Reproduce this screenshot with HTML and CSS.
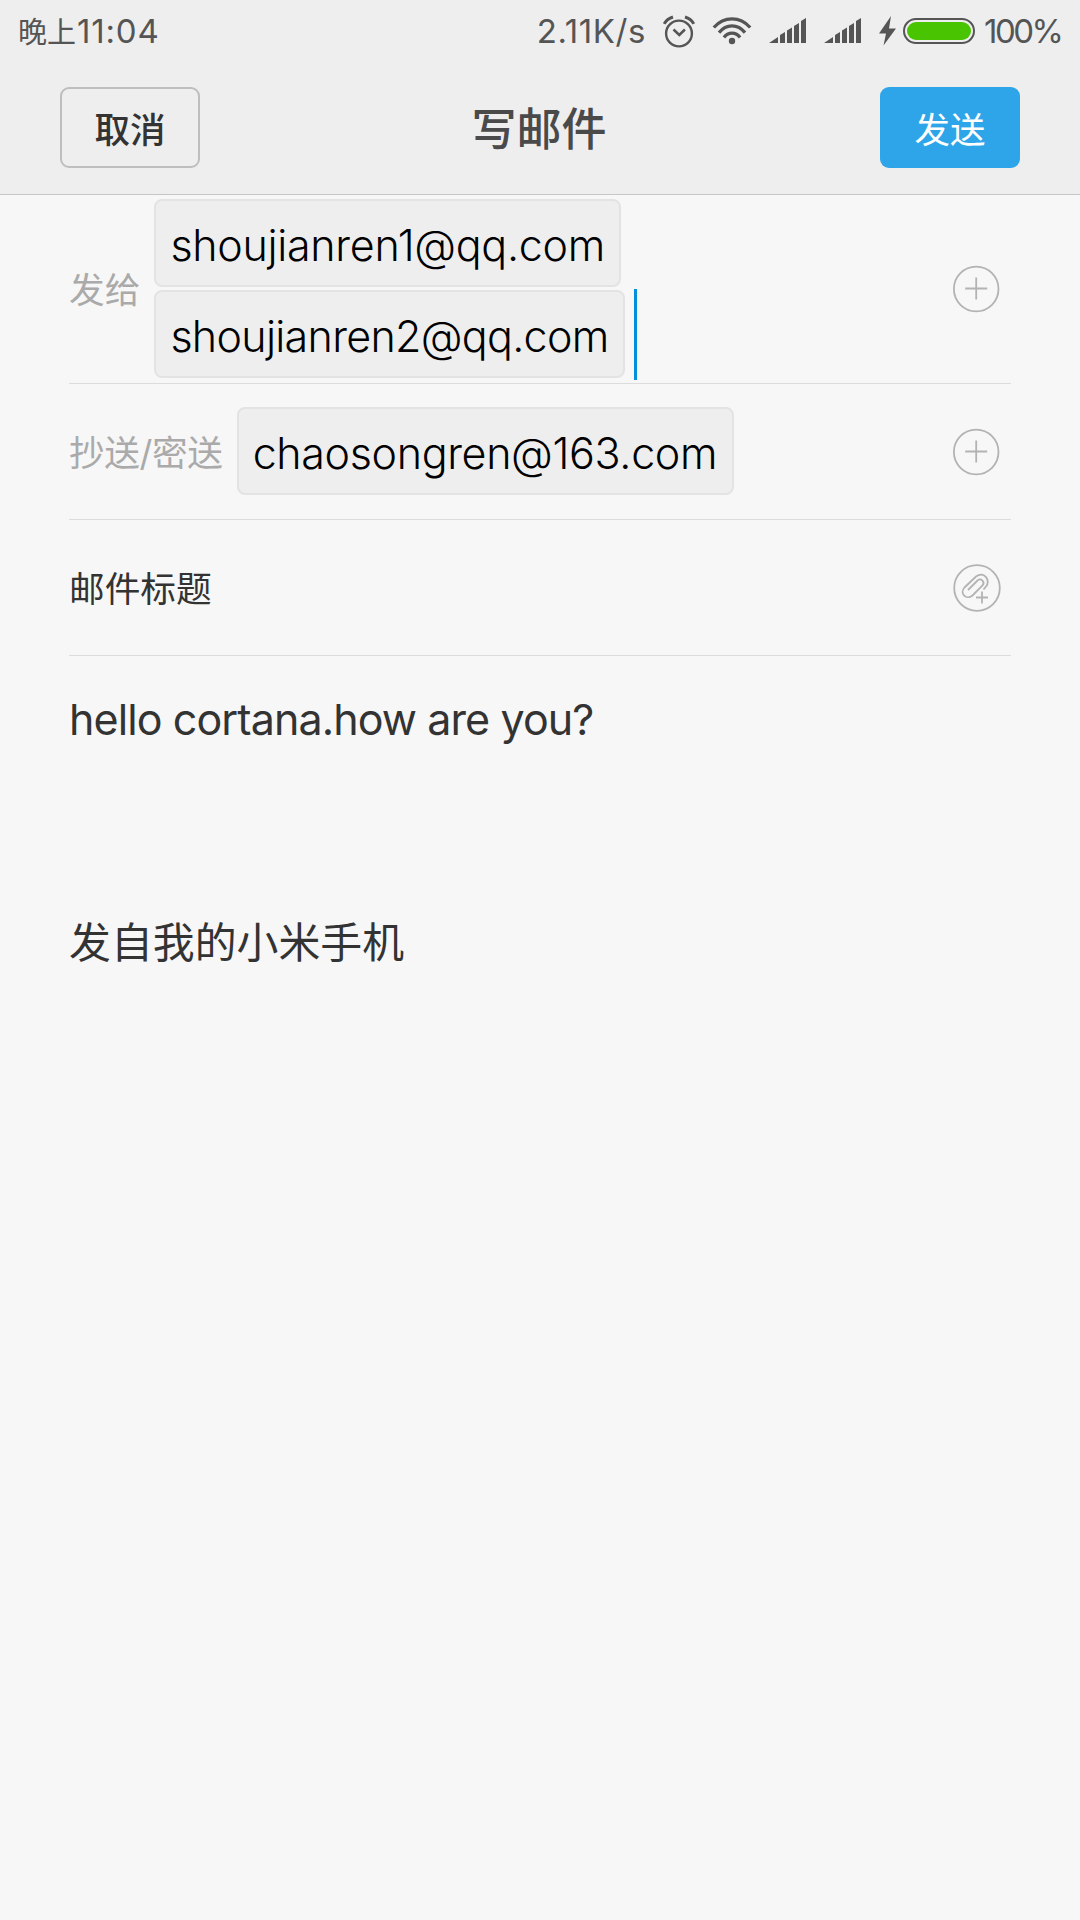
FILE: index.html
```html
<!DOCTYPE html>
<html lang="zh-CN">

<head>
    <meta charset="UTF-8">
    <meta name="viewport" content="width=device-width, initial-scale=1.0">
    <title>写邮件</title>
    <link rel="stylesheet" href="styles.css">
</head>

<body>
    <header class="top">
        <div class="status">
            <div class="time">晚上<span class="num">11:04</span></div>
            <div class="info">
                <span class="speed">2.11K/s</span>
                <svg class="alarm" width="32" height="33" viewBox="0 0 32 33" fill="none" stroke="#555">
                    <circle cx="16" cy="18.5" r="12.9" stroke-width="2.4" />
                    <path d="M10.5 14.5l5.8 5.5 5.6-5.5" stroke-width="2.5" />
                    <path d="M1.2 8.8Q4 3.8 10 2M30.8 8.8Q28 3.8 22 2" stroke-width="3" />
                </svg>
                <svg class="wifi" width="40" height="28" viewBox="0 0 40 28" fill="none" stroke="#555" stroke-width="3.3">
                    <path d="M1.8 10.5Q9.5 1.9 20 1.9T38.2 10.5" />
                    <path d="M7 15.6Q12.5 8.9 20 8.9T33 15.6" />
                    <path d="M12 20.5Q15 16.2 20 16.2T28 20.5" />
                    <circle cx="20" cy="24" r="3.2" fill="#555" stroke="none" />
                </svg>
                <svg class="signal" width="38" height="26" viewBox="0 0 38 26" fill="#555">
                    <path d="M0 25L9 19V25ZM11 17l5-3v11h-5zM18 12.500l5-3v15.500h-5zM25 8l5-3v20h-5zM32 3l5-3v25h-5z" />
                </svg>
                <svg class="signal" width="38" height="26" viewBox="0 0 38 26" fill="#555">
                    <path d="M0 25L9 19V25ZM11 17l5-3v11h-5zM18 12.500l5-3v15.500h-5zM25 8l5-3v20h-5zM32 3l5-3v25h-5z" />
                </svg>
                <svg class="bolt" width="18" height="30" viewBox="0 0 18 30" fill="#555">
                    <path d="M12 0L0 17.500H7L4.500 29.500L17 12.500H10Z" />
                </svg>
                <div class="battery"></div>
                <span class="percent">100%</span>
            </div>
        </div>
        <div class="bar">
            <button class="btn cancel">取消</button>
            <h1 class="title">写邮件</h1>
            <button class="btn send">发送</button>
        </div>
    </header>

    <main class="form">
        <div class="row to">
            <span class="label">发给</span>
            <div class="chips">
                <span class="chip">shoujianren1@qq.com</span>
                <div class="line">
                    <span class="chip two">shoujianren2@qq.com</span>
                    <i class="cursor"></i>
                </div>
            </div>
            <svg class="icon" width="48" height="48" viewBox="0 0 48 48" fill="none" stroke="#b3b3b3">
                <circle cx="23.200" cy="24" r="22.300" stroke-width="1.800" />
                <path d="M23.200 12.500v22M12.200 23.500h22" stroke-width="1.800" />
            </svg>
        </div>
        <div class="row">
            <span class="label label-cc">抄送/密送</span>
            <span class="chip cc">chaosongren@163.com</span>
            <svg class="icon" width="48" height="48" viewBox="0 0 48 48" fill="none" stroke="#b3b3b3">
                <circle cx="23.200" cy="24" r="22.300" stroke-width="1.800" />
                <path d="M23.200 12.500v22M12.200 23.500h22" stroke-width="1.800" />
            </svg>
        </div>
        <div class="row">
            <span class="subject">邮件标题</span>
            <svg class="icon" width="48" height="48" viewBox="0 0 48 48" fill="none" stroke="#b3b3b3">
                <circle cx="24" cy="24" r="22.800" stroke-width="1.800" />
                <path d="M30.500 25.500L33 22.500C38 17 31.500 6.500 23 12.500L11.500 23.500C6 29.500 13.500 36.500 19.500 31.500L29.500 21.500C32.500 18 28 13.500 24.500 16.500L15 26" stroke-width="1.800" />
                <path d="M29 27.500v12M23 33.500h12" stroke-width="1.800" />
            </svg>
        </div>
        <div class="content">
            <p class="text">hello cortana.how are you?</p>
            <p class="sign">发自我的小米手机</p>
        </div>
    </main>
</body>

</html>
```
FILE: styles.css
```css
html,
body {
    margin: 0;
    padding: 0;
    height: 100%;
    background-color: #f7f7f7;
    font-family: Inter, "Noto Sans CJK SC", sans-serif;
    color: #333;
}

.top {
    box-sizing: border-box;
    height: 195px;
    background-color: #eee;
    border-bottom: 1px solid #c6c6c6;
}

/* 状态栏 */
.status {
    display: flex;
    justify-content: space-between;
    height: 62px;
    padding: 0 18px;
    line-height: 62px;
    font-size: 29px;
    color: #555;
}

.status .num {
    margin-left: 1px;
    font-size: 33px;
    letter-spacing: 0.8px;
}

.info {
    display: flex;
    align-items: center;
}

.speed,
.percent {
    font-size: 33px;
}

.speed {
    margin-right: 17px;
    letter-spacing: 0.6px;
}

.percent {
    width: 78px;
    letter-spacing: -2.5px;
}

.alarm {
    margin-right: 17px;
}

.wifi {
    margin-right: 17px;
}

.signal {
    margin-right: 17px;
}

.bolt {
    margin-right: 6px;
}

.battery {
    box-sizing: border-box;
    width: 72px;
    height: 26px;
    padding: 2px;
    border: 2px solid #555;
    border-radius: 13px;
    background: #48c400 content-box;
    margin-right: 9px;
}

/* 标题栏 */
.bar {
    display: flex;
    justify-content: space-between;
    align-items: center;
    padding: 25px 60px 0;
}

.btn {
    box-sizing: border-box;
    width: 140px;
    height: 81px;
    padding: 0;
    border: 2px solid #bebebe;
    border-radius: 9px;
    background: none;
    font-family: inherit;
    font-size: 35.5px;
    font-weight: 500;
    color: #333;
}

.send {
    border: none;
    background-color: #2ea5e8;
    font-weight: 400;
    color: #fff;
}

.title {
    margin: 0;
    padding: 4px 2px 0 0;
    font-size: 45px;
    line-height: 77px;
    font-weight: 500;
    color: #4a4a4a;
}

/* 收件人 */
.form {
    padding: 0 69px;
}

.row {
    box-sizing: border-box;
    display: flex;
    align-items: center;
    height: 136px;
    border-bottom: 1px solid #dcdcdc;
}

.to {
    height: 189px;
}

.label,
.subject {
    margin-top: -3px;
    font-size: 35.7px;
}

.label {
    color: #aaa;
    margin-right: 14px;
}

.label-cc {
    letter-spacing: -0.4px;
}

.chips {
    display: flex;
    flex-direction: column;
    align-items: flex-start;
    gap: 3px;
    margin-bottom: 2px;
}

.line {
    display: flex;
    height: 88px;
}

.chip {
    box-sizing: border-box;
    width: 467px;
    height: 88px;
    padding-left: 14px;
    border: 2px solid #e3e3e3;
    border-radius: 8px;
    background-color: #eee;
    font-size: 43px;
    font-weight: 300;
    line-height: 89px;
    letter-spacing: -0.3px;
    white-space: nowrap;
    color: #000;
}

.two {
    width: 471px;
    letter-spacing: -0.7px;
}

.cc {
    width: 497px;
    margin-bottom: 2px;
    letter-spacing: -0.35px;
}

.cursor {
    width: 3px;
    height: 91px;
    margin: -1px 0 0 9px;
    background-color: #0090dc;
}

.icon {
    margin-left: auto;
    margin-right: 10px;
}

/* 正文 */
.content p {
    margin: 0;
}

.content .text {
    padding-top: 31px;
    font-size: 43px;
    line-height: 64px;
    font-weight: 400;
    letter-spacing: -0.9px;
}

.content .sign {
    padding-top: 160px;
    font-size: 41.9px;
    line-height: 64px;
}
```
